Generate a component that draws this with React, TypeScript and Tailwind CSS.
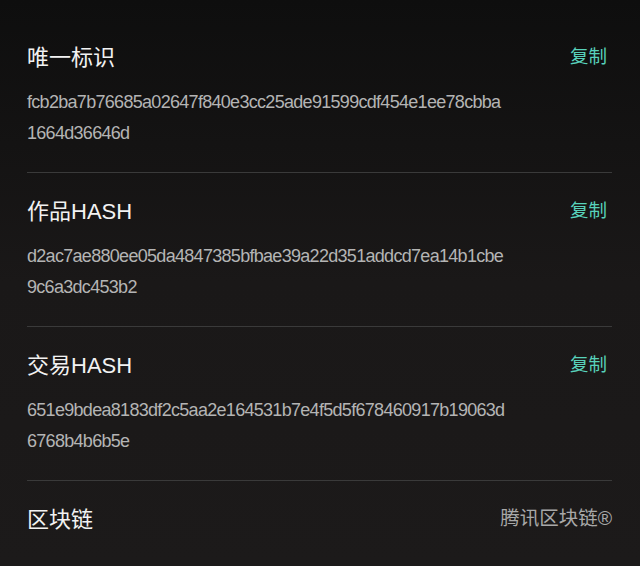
import React from 'react';

const rows = [
  {
    title: '唯一标识',
    lines: ['fcb2ba7b76685a02647f840e3cc25ade91599cdf454e1ee78cbba', '1664d36646d'],
  },
  {
    title: '作品HASH',
    lines: ['d2ac7ae880ee05da4847385bfbae39a22d351addcd7ea14b1cbe', '9c6a3dc453b2'],
  },
  {
    title: '交易HASH',
    lines: ['651e9bdea8183df2c5aa2e164531b7e4f5d5f678460917b19063d', '6768b4b6b5e'],
  },
];

const font = { fontFamily: '"Liberation Sans", "Noto Sans CJK SC", sans-serif' };

export default function App() {
  return (
    <div
      className="w-[640px] h-[566px] overflow-hidden bg-gradient-to-b from-[#0e0e0e] via-[#1a1818] to-[#1c1a1a] pl-[27px] pr-[28px] pt-[38px]"
      style={font}
    >
      {rows.map((row) => (
        <div key={row.title} className="border-b border-[#3a3a3a] pb-[23px] mb-[19px]">
          <div className="flex items-center justify-between h-[38px]">
            <span className="text-[22px] text-[#f2f2f2]">{row.title}</span>
            <span className="text-[18.5px] text-[#58d2bb] mr-[5px]">复制</span>
          </div>
          <div className="mt-[11px] text-[18px] tracking-[-0.7px] leading-[31px] text-[#b4b4b4]">
            {row.lines.map((l) => (
              <div key={l}>{l}</div>
            ))}
          </div>
        </div>
      ))}
      <div className="flex items-center justify-between h-[38px]">
        <span className="text-[22px] text-[#f2f2f2]">区块链</span>
        <span className="text-[19.5px] text-[#a8a8a8]">腾讯区块链®</span>
      </div>
    </div>
  );
}
